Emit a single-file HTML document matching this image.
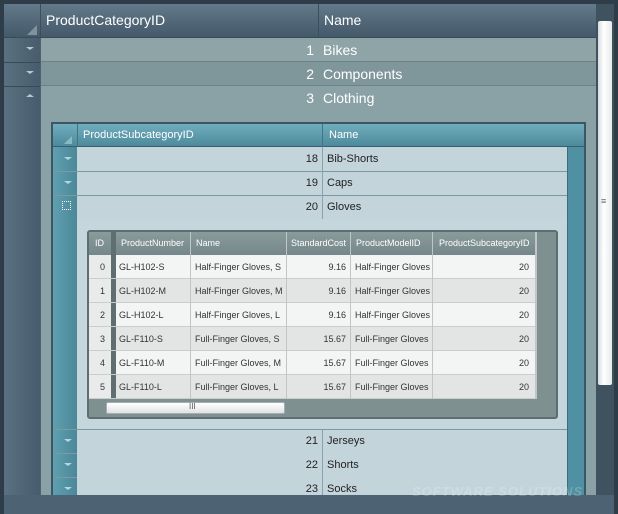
<!DOCTYPE html>
<html><head><style>
body{margin:0;width:618px;height:514px;overflow:hidden;background:#4a5d6e;font-family:"Liberation Sans",sans-serif;position:relative}
div{position:absolute;box-sizing:border-box}
.t{white-space:nowrap}
</style></head><body>
<div style="left:0;top:0;width:618px;height:514px;border:4px solid #2f3d48;border-bottom:none;background:#4d6272"></div>
<div style="left:4px;top:4px;width:36px;height:491px;background:linear-gradient(90deg,#5a7181,#475c6c)"></div>
<div style="left:4px;top:4px;width:592px;height:34px;background:linear-gradient(#627a8a,#44596a);border-bottom:1px solid #3a4b58"></div>
<div style="left:40px;top:4px;width:1px;height:34px;background:#3c4f5c"></div>
<div style="left:318px;top:4px;width:1px;height:106px;background:#3c4f5c"></div>
<div class="t" style="left:46px;top:12px;color:#fff;font-size:14px">ProductCategoryID</div>
<div class="t" style="left:324px;top:12px;color:#fff;font-size:14px">Name</div>
<div style="left:27px;top:25px;width:0;height:0;border-left:10px solid transparent;border-bottom:10px solid #7e92a0"></div>
<div style="left:41px;top:38px;width:555px;height:24px;background:#8ea4a7;border-bottom:1px solid #6c8289"></div>
<div style="left:41px;top:62px;width:555px;height:24px;background:#7f969b;border-bottom:1px solid #6c8289"></div>
<div style="left:41px;top:86px;width:555px;height:409px;background:#8aa1a5"></div>
<div style="left:4px;top:62px;width:36px;height:1px;background:#3a4b58"></div>
<div style="left:4px;top:86px;width:36px;height:1px;background:#3a4b58"></div>
<div class="t" style="left:300px;top:42px;width:14px;text-align:right;color:#fff;font-size:14px">1</div>
<div class="t" style="left:323px;top:42px;color:#fff;font-size:14px">Bikes</div>
<div class="t" style="left:300px;top:66px;width:14px;text-align:right;color:#fff;font-size:14px">2</div>
<div class="t" style="left:323px;top:66px;color:#fff;font-size:14px">Components</div>
<div class="t" style="left:300px;top:90px;width:14px;text-align:right;color:#fff;font-size:14px">3</div>
<div class="t" style="left:323px;top:90px;color:#fff;font-size:14px">Clothing</div>
<div style="left:26px;top:47px;border-left:4px solid transparent;border-right:4px solid transparent;border-top:3px solid #b8c6cf"></div>
<div style="left:26px;top:71px;border-left:4px solid transparent;border-right:4px solid transparent;border-top:3px solid #b8c6cf"></div>
<div style="left:26px;top:94px;border-left:4px solid transparent;border-right:4px solid transparent;border-bottom:3px solid #b8c6cf"></div>
<div style="left:596px;top:4px;width:18px;height:491px;background:#3f5260"></div>
<div style="left:598px;top:21px;width:14px;height:364px;background:linear-gradient(90deg,#d8dcde,#fff 40%,#e8eaeb);border-radius:2px"></div>
<div class="t" style="left:601px;top:196px;font-size:9px;color:#666">≡</div>
<div style="left:51px;top:122px;width:535px;height:373px;background:#c5d6dc;border:2px solid #3c5763;border-bottom:none"></div>
<div style="left:53px;top:124px;width:24px;height:371px;background:linear-gradient(90deg,#5f9fb0,#4b8898)"></div>
<div style="left:567px;top:124px;width:17px;height:371px;background:#4f90a2;border-left:1px solid #3c6d7b"></div>
<div style="left:53px;top:124px;width:531px;height:23px;background:linear-gradient(#70adbd,#4d8a9b);border-bottom:1px solid #3c5e6a"></div>
<div style="left:77px;top:124px;width:1px;height:23px;background:#3f7585"></div>
<div style="left:322px;top:124px;width:1px;height:23px;background:#3f7585"></div>
<div class="t" style="left:83px;top:129px;color:#fff;font-size:11px">ProductSubcategoryID</div>
<div class="t" style="left:329px;top:129px;color:#fff;font-size:11px">Name</div>
<div style="left:64px;top:136px;border-left:8px solid transparent;border-bottom:8px solid #8ab8c5"></div>
<div style="left:77px;top:147px;width:490px;height:72px;background:#c3d4db"></div>
<div style="left:53px;top:171px;width:514px;height:1px;background:#7d9aa4"></div>
<div style="left:53px;top:195px;width:514px;height:1px;background:#7d9aa4"></div>
<div style="left:53px;top:429px;width:514px;height:1px;background:#7d9aa4"></div>
<div style="left:53px;top:453px;width:514px;height:1px;background:#7d9aa4"></div>
<div style="left:53px;top:477px;width:514px;height:1px;background:#7d9aa4"></div>
<div style="left:77px;top:430px;width:490px;height:65px;background:#c3d4db"></div>
<div style="left:322px;top:147px;width:1px;height:72px;background:#8aa2ab"></div>
<div style="left:322px;top:430px;width:1px;height:65px;background:#8aa2ab"></div>
<div class="t" style="left:290px;top:153px;width:28px;text-align:right;font-size:11px;color:#222">18</div>
<div class="t" style="left:327px;top:153px;font-size:11px;color:#222">Bib-Shorts</div>
<div class="t" style="left:290px;top:177px;width:28px;text-align:right;font-size:11px;color:#222">19</div>
<div class="t" style="left:327px;top:177px;font-size:11px;color:#222">Caps</div>
<div class="t" style="left:290px;top:201px;width:28px;text-align:right;font-size:11px;color:#222">20</div>
<div class="t" style="left:327px;top:201px;font-size:11px;color:#222">Gloves</div>
<div class="t" style="left:290px;top:435px;width:28px;text-align:right;font-size:11px;color:#222">21</div>
<div class="t" style="left:327px;top:435px;font-size:11px;color:#222">Jerseys</div>
<div class="t" style="left:290px;top:459px;width:28px;text-align:right;font-size:11px;color:#222">22</div>
<div class="t" style="left:327px;top:459px;font-size:11px;color:#222">Shorts</div>
<div class="t" style="left:290px;top:483px;width:28px;text-align:right;font-size:11px;color:#222">23</div>
<div class="t" style="left:327px;top:483px;font-size:11px;color:#222">Socks</div>
<div style="left:64px;top:157px;border-left:4px solid transparent;border-right:4px solid transparent;border-top:3px solid #b5d6df"></div>
<div style="left:64px;top:181px;border-left:4px solid transparent;border-right:4px solid transparent;border-top:3px solid #b5d6df"></div>
<div style="left:62px;top:201px;width:9px;height:9px;border:1px dotted #fff"></div>
<div style="left:64px;top:439px;border-left:4px solid transparent;border-right:4px solid transparent;border-top:3px solid #b5d6df"></div>
<div style="left:64px;top:463px;border-left:4px solid transparent;border-right:4px solid transparent;border-top:3px solid #b5d6df"></div>
<div style="left:64px;top:487px;border-left:4px solid transparent;border-right:4px solid transparent;border-top:3px solid #b5d6df"></div>
<div style="left:87px;top:230px;width:471px;height:189px;background:#7e908f;border:2px solid #5e6e70;border-radius:3px"></div>
<div style="left:89px;top:232px;width:446px;height:23px;background:linear-gradient(#8a9b9b,#75878a)"></div>
<div style="left:111px;top:232px;width:5px;height:167px;background:#5f6e70"></div>
<div style="left:89px;top:255px;width:22px;height:144px;background:#e9ebeb"></div>
<div style="left:116px;top:255px;width:419px;height:144px;background:repeating-linear-gradient(#f3f4f4 0 24px,#e3e5e5 24px 48px)"></div>
<div style="left:89px;top:255px;width:446px;height:144px;background:repeating-linear-gradient(transparent 0 23px,#c9cdcd 23px 24px)"></div>
<div style="left:190px;top:232px;width:1px;height:167px;background:#c0c6c6"></div>
<div style="left:286px;top:232px;width:1px;height:167px;background:#c0c6c6"></div>
<div style="left:350px;top:232px;width:1px;height:167px;background:#c0c6c6"></div>
<div style="left:432px;top:232px;width:1px;height:167px;background:#c0c6c6"></div>
<div style="left:535px;top:232px;width:2px;height:167px;background:#c0c6c6"></div>
<div class="t" style="left:95px;top:238px;font-size:9px;color:#fff">ID</div>
<div class="t" style="left:121px;top:238px;font-size:9px;color:#fff">ProductNumber</div>
<div class="t" style="left:196px;top:238px;font-size:9px;color:#fff">Name</div>
<div class="t" style="left:291px;top:238px;font-size:9px;color:#fff">StandardCost</div>
<div class="t" style="left:356px;top:238px;font-size:9px;color:#fff">ProductModelID</div>
<div class="t" style="left:439px;top:238px;font-size:9px;color:#fff">ProductSubcategoryID</div>
<div style="left:89px;top:255px;width:446px;font-size:9px;color:#333;line-height:24px">
<div style="position:relative;height:24px"><span style="position:absolute;left:11px">0</span><span style="position:absolute;left:30px">GL-H102-S</span><span style="position:absolute;left:106px">Half-Finger Gloves, S</span><span style="position:absolute;right:189px">9.16</span><span style="position:absolute;left:266px">Half-Finger Gloves</span><span style="position:absolute;right:6px">20</span></div>
<div style="position:relative;height:24px"><span style="position:absolute;left:11px">1</span><span style="position:absolute;left:30px">GL-H102-M</span><span style="position:absolute;left:106px">Half-Finger Gloves, M</span><span style="position:absolute;right:189px">9.16</span><span style="position:absolute;left:266px">Half-Finger Gloves</span><span style="position:absolute;right:6px">20</span></div>
<div style="position:relative;height:24px"><span style="position:absolute;left:11px">2</span><span style="position:absolute;left:30px">GL-H102-L</span><span style="position:absolute;left:106px">Half-Finger Gloves, L</span><span style="position:absolute;right:189px">9.16</span><span style="position:absolute;left:266px">Half-Finger Gloves</span><span style="position:absolute;right:6px">20</span></div>
<div style="position:relative;height:24px"><span style="position:absolute;left:11px">3</span><span style="position:absolute;left:30px">GL-F110-S</span><span style="position:absolute;left:106px">Full-Finger Gloves, S</span><span style="position:absolute;right:189px">15.67</span><span style="position:absolute;left:266px">Full-Finger Gloves</span><span style="position:absolute;right:6px">20</span></div>
<div style="position:relative;height:24px"><span style="position:absolute;left:11px">4</span><span style="position:absolute;left:30px">GL-F110-M</span><span style="position:absolute;left:106px">Full-Finger Gloves, M</span><span style="position:absolute;right:189px">15.67</span><span style="position:absolute;left:266px">Full-Finger Gloves</span><span style="position:absolute;right:6px">20</span></div>
<div style="position:relative;height:24px"><span style="position:absolute;left:11px">5</span><span style="position:absolute;left:30px">GL-F110-L</span><span style="position:absolute;left:106px">Full-Finger Gloves, L</span><span style="position:absolute;right:189px">15.67</span><span style="position:absolute;left:266px">Full-Finger Gloves</span><span style="position:absolute;right:6px">20</span></div>
</div>
<div style="left:106px;top:402px;width:179px;height:12px;background:linear-gradient(#fff,#dfe2e3);border:1px solid #aab;border-radius:2px"></div>
<div class="t" style="left:189px;top:402px;font-size:8px;color:#555">III</div>
<div class="t" style="left:412px;top:484px;font-size:13px;font-style:italic;font-weight:bold;letter-spacing:1px;color:rgba(255,255,255,0.2)">SOFTWARE SOLUTIONS</div>
</body></html>
